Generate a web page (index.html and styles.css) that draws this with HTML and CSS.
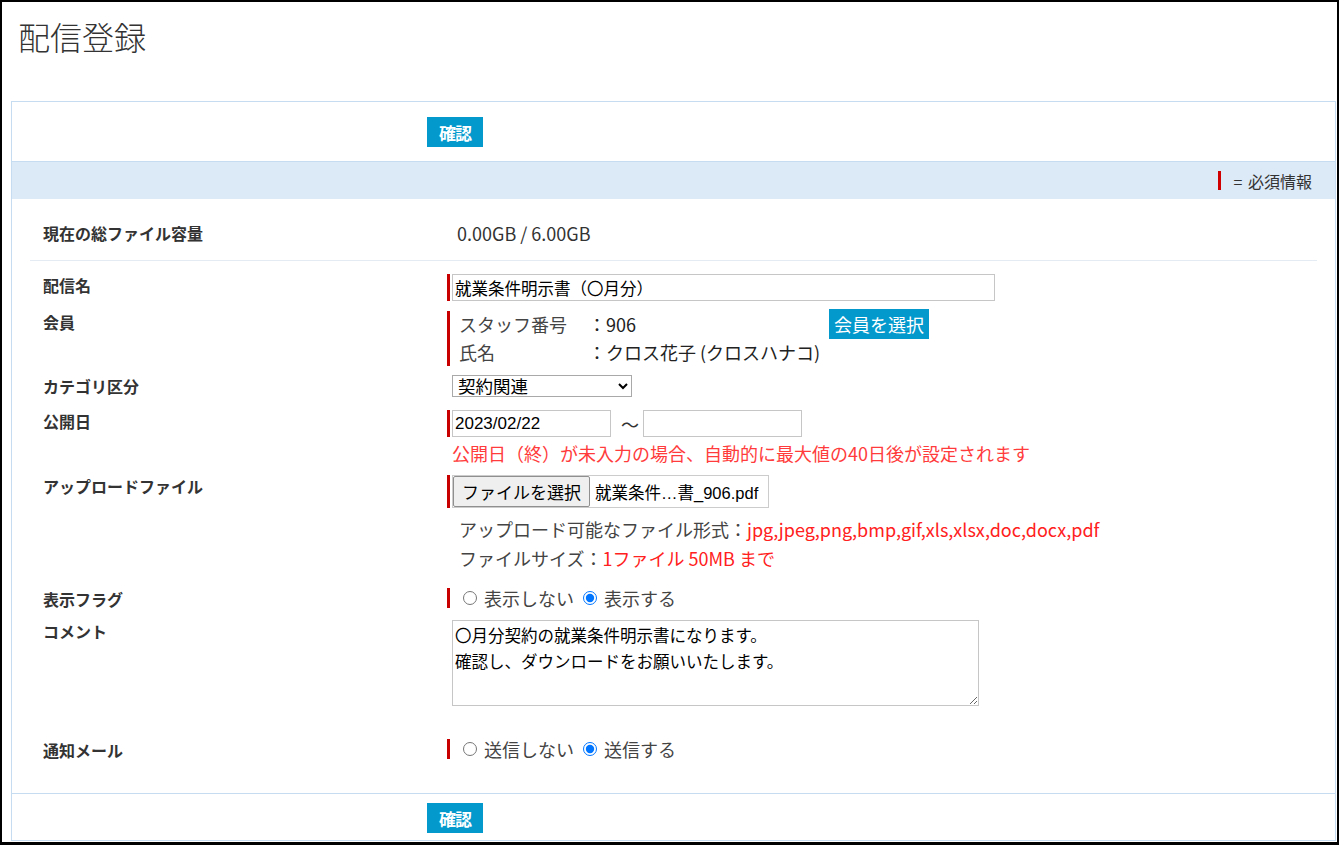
FILE: index.html
```html
<!doctype html>
<html lang="ja">
<head>
	<meta charset="UTF-8">
	<title>配信登録</title>
	<link rel="stylesheet" href="styles.css">
</head>
<body>
<div class="page">
	<h1 class="title">配信登録</h1>

	<div class="panel">
		<div class="panel-head">
			<button class="btn-confirm" type="button">確認</button>
		</div>
		<div class="legend"><span class="req-mark"></span>=&nbsp;必須情報</div>

		<div class="form">
			<div class="row row-total">
				<div class="label">現在の総ファイル容量</div>
				<div class="value-text">0.00GB / 6.00GB</div>
			</div>

			<div class="row">
				<div class="label">配信名</div>
				<div class="field">
					<div class="req"><input class="text-input name-input" type="text" value="就業条件明示書（〇月分）"></div>
				</div>
			</div>

			<div class="row row-member">
				<div class="label">会員</div>
				<div class="field">
					<div class="member">
						<span class="member-key">スタッフ番号</span>
						<span class="member-val">：906</span>
						<button class="btn-member" type="button">会員を選択</button>
						<span class="member-key">氏名</span>
						<span class="member-val">：クロス花子 (クロスハナコ)</span>
					</div>
				</div>
			</div>

			<div class="row row-cat">
				<div class="label">カテゴリ区分</div>
				<div class="field">
					<select class="cat-select">
						<option>契約関連</option>
					</select>
				</div>
			</div>

			<div class="row">
				<div class="label">公開日</div>
				<div class="field">
					<div class="date-line">
						<div class="req"><input class="text-input date-input" type="text" value="2023/02/22"></div>
						<span class="tilde">～</span>
						<input class="text-input date-input" type="text" value="">
					</div>
					<div class="note">公開日（終）が未入力の場合、自動的に最大値の40日後が設定されます</div>
				</div>
			</div>

			<div class="row row-upload">
				<div class="label">アップロードファイル</div>
				<div class="field">
					<div class="req">
						<div class="file">
							<span class="file-btn">ファイルを選択</span>
							<span class="file-name">就業条件…書_906.pdf</span>
						</div>
					</div>
					<div class="file-info">
						<div>アップロード可能なファイル形式：<span class="red">jpg,jpeg,png,bmp,gif,xls,xlsx,doc,docx,pdf</span></div>
						<div>ファイルサイズ：<span class="red">1ファイル 50MB まで</span></div>
					</div>
				</div>
			</div>

			<div class="row row-flag">
				<div class="label">表示フラグ</div>
				<div class="field">
					<div class="radios">
						<label><input type="radio" name="flag">表示しない</label>
						<label><input type="radio" name="flag" checked>表示する</label>
					</div>
				</div>
			</div>

			<div class="row row-comment">
				<div class="label">コメント</div>
				<div class="field">
					<textarea class="comment">〇月分契約の就業条件明示書になります。
確認し、ダウンロードをお願いいたします。</textarea>
				</div>
			</div>

			<div class="row">
				<div class="label">通知メール</div>
				<div class="field">
					<div class="radios">
						<label><input type="radio" name="mail">送信しない</label>
						<label><input type="radio" name="mail" checked>送信する</label>
					</div>
				</div>
			</div>
		</div>

		<div class="panel-foot">
			<button class="btn-confirm" type="button">確認</button>
		</div>
	</div>
</div>
</body>
</html>
```

FILE: styles.css
```css
body{
	margin: 0;
	font-family: "Noto Sans CJK JP", sans-serif;
	color: #333;
	background: #fff;
}
.page{
	height: 845px;
	box-sizing: border-box;
	border: solid #000;
	border-width: 2px 2px 3px 2px;
	overflow: hidden;
}
.title{
	margin: 0;
	padding: 16px 0 0 16px;
	font-size: 32px;
	line-height: 36px;
	font-weight: 300;
	color: #333;
}
.panel{
	margin: 47px 1px 0 9px;
	border: 1px solid #c5dcf1;
}
.panel-head{
	padding: 15px 0 14px 415px;
	border-bottom: 1px solid #c5dcf1;
}
.panel-foot{
	padding: 9px 0 7px 415px;
	border-top: 1px solid #c5dcf1;
}
.btn-confirm{
	display: block;
	width: 56px;
	height: 30px;
	padding: 0;
	border: none;
	background: #0399cd;
	color: #fff;
	font-family: "Noto Sans CJK JP", sans-serif;
	font-size: 17px;
	font-weight: bold;
	letter-spacing: -1px;
}
.legend{
	height: 37px;
	background: #dce9f7;
	display: flex;
	justify-content: flex-end;
	align-items: center;
	padding-right: 23px;
	font-size: 16px;
	word-spacing: 2px;
}
.req-mark{
	width: 3px;
	height: 19px;
	background: #d00000;
	margin-right: 13px;
}

/* form rows */
.form{
	margin: 0 18px;
	padding-bottom: 28px;
}
.row{
	display: grid;
	grid-template-columns: 417px 1fr;
	padding: 5px 0;
}
.label{
	padding: 1px 0 0 13px;
	font-size: 16px;
	line-height: 20px;
	font-weight: bold;
}
.row-total{
	align-items: center;
	padding: 24px 0 17px;
	border-bottom: 1px solid #e4ebf2;
	margin-bottom: 8px;
}
.row-total .label{
	padding-top: 0;
}
.value-text{
	padding-left: 10px;
	font-size: 18px;
	line-height: 20px;
}
.row-member{ padding-bottom: 4px; }
.row-cat{ padding-bottom: 8px; }
.row-upload{ padding-bottom: 10px; }
.row-flag{ padding-bottom: 6px; }
.row-comment{ padding-bottom: 28px; }

.req{
	display: flex;
	width: max-content;
	border-left: 3px solid #c80000;
	padding-left: 2px;
}
.text-input{
	height: 27px;
	box-sizing: border-box;
	border: 1px solid #c6c6c6;
	padding: 0 2px;
	font-family: "Liberation Sans", "Noto Sans CJK JP", sans-serif;
	font-size: 16.5px;
	color: #000;
	outline: none;
}
.name-input{ width: 543px; }
.date-input{
	width: 159px;
	font-size: 17px;
}

.member{
	display: grid;
	grid-template-columns: 129px 241px auto;
	grid-template-rows: 27.5px 27.5px;
	width: max-content;
	border-left: 3px solid #c80000;
	padding-left: 9px;
	font-size: 18px;
	line-height: 27.5px;
}
.member-key{ color: #444; }
.member-val{ color: #222; }
.btn-member{
	align-self: start;
	margin-top: -2px;
	height: 30px;
	padding: 0 5px;
	border: none;
	background: #0399cd;
	color: #fff;
	font-family: "Noto Sans CJK JP", sans-serif;
	font-size: 18px;
}

.cat-select{
	display: block;
	margin-left: 5px;
	width: 180px;
	height: 22px;
	border: 1px solid #a9a9a9;
	background: #fff;
	font-family: "Liberation Sans", "Noto Sans CJK JP", sans-serif;
	font-size: 17.5px;
	color: #000;
	padding: 0 1px;
}

.date-line{
	display: flex;
	align-items: center;
}
.tilde{
	margin: 0 4px 0 10px;
	font-size: 18px;
}
.note{
	margin-top: 4px;
	padding-left: 5px;
	color: #ff3b3b;
	font-size: 18px;
	line-height: 24px;
}

.file{
	display: flex;
	align-items: center;
	width: 317px;
	height: 33px;
	box-sizing: border-box;
	border: 1px solid #ccc;
}
.file-btn{
	height: 31px;
	box-sizing: border-box;
	border: 1px solid #8f8f8f;
	border-radius: 2px;
	background: #efefef;
	padding: 0 8px;
	font-size: 17px;
	line-height: 29px;
	color: #000;
}
.file-name{
	margin-left: 5px;
	font-family: "Liberation Sans", "Noto Sans CJK JP", sans-serif;
	font-size: 16.5px;
	color: #000;
}
.file-info{
	margin-top: 7px;
	padding-left: 12px;
	font-size: 18px;
	line-height: 29px;
	color: #444;
}
.red{ color: #ff2020; }

.radios{
	display: flex;
	align-items: center;
	height: 20px;
	border-left: 3px solid #c80000;
	padding-left: 8px;
	font-size: 18px;
	color: #444;
}
.radios label{
	display: flex;
	align-items: center;
	margin-right: 4px;
}
.radios input{
	width: 14px;
	height: 14px;
	margin: 0 7px 0 5px;
}

.comment{
	display: block;
	margin-left: 5px;
	width: 527px;
	height: 86px;
	box-sizing: border-box;
	border: 1px solid #c6c6c6;
	padding: 2px;
	font-family: "Liberation Sans", "Noto Sans CJK JP", sans-serif;
	font-size: 16.5px;
	line-height: 26px;
	color: #000;
	outline: none;
}
```
